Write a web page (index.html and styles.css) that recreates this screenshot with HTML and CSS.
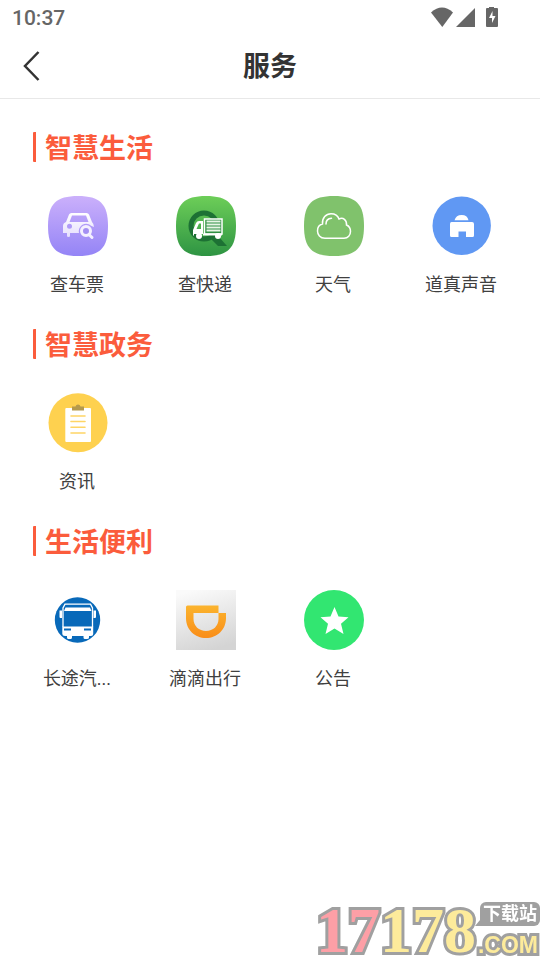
FILE: index.html
```html
<!DOCTYPE html>
<html lang="zh-CN">
<head>
<meta charset="utf-8">
<meta name="viewport" content="width=device-width, initial-scale=1">
<title>服务</title>
<link rel="stylesheet" href="styles.css">
</head>
<body>
<div class="status">
  <span class="time">10:37</span>
  <svg class="status-icons" width="68" height="22" viewBox="0 0 68 22" fill="#666" aria-hidden="true">
    <path d="M1 6.500Q12-3.500 23 6.500L12.300 21Z"/>
    <path d="M26 21L45 2V21Z"/>
    <path fill-rule="evenodd" d="M59 1h5v1h3q1 0 1 1v17q0 1-1 1H57q-1 0-1-1V3q0-1 1-1h2ZM62.500 5L59 12h3v5l3.500-7h-3Z"/>
  </svg>
</div>
<header class="bar">
  <button class="back" type="button" aria-label="返回">
    <svg width="18" height="32" viewBox="0 0 18 32" fill="none" stroke="#333" stroke-width="2.500" aria-hidden="true"><path d="M15.500 1L2 15L15.500 29"/></svg>
  </button>
  <h1>服务</h1>
</header>
<main>
  <section>
    <h2>智慧生活</h2>
    <div class="grid">
      <a class="item" href="#ticket">
        <svg class="icon" viewBox="0 0 60 60" aria-hidden="true">
          <defs>
            <linearGradient id="violet" x1="0" y1="0" x2="0" y2="1"><stop stop-color="#cbb0fb"/><stop offset="1" stop-color="#9484f6"/></linearGradient>
            <linearGradient id="pale" x1="0" y1="0" x2="0" y2="1"><stop stop-color="#fff"/><stop offset="1" stop-color="#e6defd"/></linearGradient>
          </defs>
          <path fill="url(#violet)" d="M30 0C52 0 60 8 60 30S52 60 30 60 0 52 0 30 8 0 30 0Z"/>
          <path fill="url(#pale)" fill-rule="evenodd" d="M18 26L21 18.500Q21.700 17 23.500 17H38.500Q40.300 17 41 18.500L44 26Q46 28 46 31L43.500 30Q39 26 34 29Q30 32 31 37H22V40Q22 41 20.500 41T19 40V37H15V30Q15 27 18 26ZM24 19.500L21.500 26H40.500L38 19.500ZM21.500 27.800a2.500 2.500 0 1 0 0 5 2.500 2.500 0 0 0 0-5Z"/>
          <circle cx="38" cy="35" r="4.500" fill="#a48ff3" stroke="#f4f0ff" stroke-width="3"/>
          <path d="M41 38.500L44 41.500" stroke="#f4f0ff" stroke-width="3" stroke-linecap="round"/>
        </svg>
        <span class="label">查车票</span>
      </a>
      <a class="item" href="#parcel">
        <svg class="icon" viewBox="0 0 60 60" aria-hidden="true">
          <defs><linearGradient id="green" x1="0" y1="0" x2="0" y2="1"><stop stop-color="#6dce58"/><stop offset="1" stop-color="#2e9443"/></linearGradient></defs>
          <path fill="url(#green)" d="M30 0C52 0 60 8 60 30S52 60 30 60 0 52 0 30 8 0 30 0Z"/>
          <circle cx="28" cy="30" r="13" fill="none" stroke="#1d7134" stroke-width="5"/>
          <path d="M36 40L43 41L51 50H42L34 42Z" fill="#1d7134"/>
          <path fill="#2f8f42" stroke="#fff" stroke-width="1.500" d="M28.500 23H46V38H28.500Z"/>
          <path d="M30.500 25.500H44.500M30.500 28.500H44.500M30.500 31.500H44.500M30.500 34.500H44.500" stroke="#e8f5e5" stroke-width="2"/>
          <path fill="#fff" fill-rule="evenodd" d="M27 25V38H18V40L17 39V34L20 27Q21 25 23 25ZM25 27.500H23L20.500 33H25Z"/>
          <path d="M27 38.500H46" stroke="#fff" stroke-width="2"/>
          <circle cx="23" cy="40" r="3" fill="#fff"/><circle cx="42" cy="40" r="3" fill="#fff"/>
        </svg>
        <span class="label">查快递</span>
      </a>
      <a class="item" href="#weather">
        <svg class="icon" viewBox="0 0 60 60" aria-hidden="true">
          <path fill="#80c26c" d="M30 0C52 0 60 8 60 30S52 60 30 60 0 52 0 30 8 0 30 0Z"/>
          <path fill="none" stroke="#fff" stroke-width="1.500" stroke-linecap="round" d="M21 42.200C16 42.200 13.500 38.500 13.500 35C13.500 31 16 28.500 18.500 28C18 22 22 17.700 27 17.700C31 17.700 34 20 35 23C39 21 43 24 42.500 29C45 30 46.500 32.500 46.500 35.500C46.500 39 44 42.200 40 42.200ZM22 28C22 24.500 24 22.500 27.500 22.300"/>
        </svg>
        <span class="label">天气</span>
      </a>
      <a class="item" href="#voice">
        <svg class="icon" viewBox="0 0 60 60" aria-hidden="true">
          <circle cx="29.700" cy="29.700" r="29.200" fill="#6098f3"/>
          <path fill="#fff" d="M22.500 24.300Q24 19 29.700 19T36.500 24.300ZM19.500 26H40Q42 26 42 28V39.500Q42 41 40.500 41H34V35.500H26.500V41H19.500Q18 41 18 39.500V28Q18 26 19.500 26Z"/>
        </svg>
        <span class="label">道真声音</span>
      </a>
    </div>
  </section>
  <section>
    <h2>智慧政务</h2>
    <div class="grid">
      <a class="item" href="#news">
        <svg class="icon" viewBox="0 0 60 60" aria-hidden="true">
          <circle cx="30" cy="29.700" r="29.500" fill="#fed14f"/>
          <rect x="17.300" y="15" width="25.700" height="34" rx="1" fill="#fff"/>
          <path fill="#b59a4c" d="M24 13.500H27.500Q28 11.500 30 11.500T32.500 13.500H36V17.500H24Z"/>
          <path d="M23 23H37M23 28.500H37M23 34.300H37M23 40H37" stroke="#fed565" stroke-width="1.600" stroke-linecap="round"/>
        </svg>
        <span class="label">资讯</span>
      </a>
    </div>
  </section>
  <section>
    <h2>生活便利</h2>
    <div class="grid">
      <a class="item" href="#coach">
        <svg class="icon" viewBox="0 0 60 60" aria-hidden="true">
          <circle cx="29.500" cy="30" r="22.700" fill="#0869b9"/>
          <path fill="none" stroke="#fff" stroke-width="1.300" d="M15 37V18L17 14.200H42.500L44.500 18V37"/>
          <path fill="#fff" d="M17.500 17.500H42L43.500 21H16ZM11.500 20.500H14V28H12.500Q11.500 28 11.500 27ZM45.500 20.500H48V27Q48 28 47 28H45.500ZM14.300 36.500H45.200V44Q45.200 46 43 46H41V47.500Q41 49 39 49H37Q35.500 49 35.500 47.500V46H24V47.500Q24 49 22.500 49H20.500Q19 49 19 47.500V46H17Q14.300 46 14.300 44Z"/>
          <path fill="#0869b9" d="M16 38.500H23V40.500H16ZM36 38.500H43V40.500H36Z"/>
        </svg>
        <span class="label">长途汽...</span>
      </a>
      <a class="item" href="#ride">
        <svg class="icon" viewBox="0 0 60 60" aria-hidden="true">
          <defs>
            <linearGradient id="silver" x1=".3" y1="0" x2=".6" y2="1"><stop stop-color="#fafafa"/><stop offset="1" stop-color="#d4d4d4"/></linearGradient>
            <linearGradient id="orange" x1="0" y1="0" x2="0" y2="1"><stop stop-color="#fbb42e"/><stop offset="1" stop-color="#f98d19"/></linearGradient>
          </defs>
          <rect width="60" height="60" fill="url(#silver)"/>
          <path fill="url(#orange)" fill-rule="evenodd" d="M11.500 15.500H42.500V23H50V28C50 40 41 48 30 48S10 40 10 28V17Q10 15.500 11.500 15.500ZM17.500 23V29C17.500 36 23 41 30 41S42.500 36 42.500 29V23Z"/>
        </svg>
        <span class="label">滴滴出行</span>
      </a>
      <a class="item" href="#notice">
        <svg class="icon" viewBox="0 0 60 60" aria-hidden="true">
          <circle cx="30" cy="30" r="30" fill="#32e671"/>
          <path fill="#fff" d="M30.500 17L34.500 26.500L44.500 27.200L37 33.800L39.500 44L30.500 38.500L21.500 44L24 33.800L16.500 27.200L26.500 26.500Z"/>
        </svg>
        <span class="label">公告</span>
      </a>
    </div>
  </section>
</main>
<div class="mark">
  <div class="digits"><span class="pink">17</span><span>178</span></div>
  <div class="side"><span class="tag">下载站</span><span class="com">.COM</span></div>
</div>
</body>
</html>
```
FILE: styles.css
```css
* { box-sizing: border-box; }

body {
  margin: 0;
  min-height: 100vh;
  background: #fff;
  color: #333;
  font-family: Roboto, "Noto Sans CJK SC", sans-serif;
}

.status {
  display: flex;
  align-items: center;
  justify-content: space-between;
  height: 36px;
  padding: 0 42px 0 12px;
  color: #666;
}

.status-icons { margin-bottom: 2px; }

.time {
  font-size: 21px;
  line-height: 38px;
  font-weight: 500;
}

.bar {
  display: grid;
  grid-template-columns: 64px 1fr 64px;
  align-items: center;
  height: 63px;
  border-bottom: 1px solid #e8e8e8;
}

.back {
  display: flex;
  align-items: center;
  height: 60px;
  padding: 0 0 0 23px;
  border: 0;
  background: none;
}

h1 {
  margin: 0;
  font-size: 27px;
  line-height: 40px;
  font-weight: 700;
  text-align: center;
}

main { padding-top: 33px; }

section { margin-bottom: 32px; }

h2 {
  margin: 0 33px 34px;
  padding: 4px 0 0 9px;
  border-left: 3px solid #fb5c3c;
  border-radius: 1px;
  color: #fb5c3c;
  font-size: 27px;
  line-height: 26px;
  font-weight: 700;
}

.grid {
  display: grid;
  grid-template-columns: repeat(4, 1fr);
  padding: 0 14px;
}

.item {
  display: flex;
  flex-direction: column;
  align-items: center;
  gap: 16px;
  color: #404040;
  font-size: 18px;
  line-height: 25px;
  text-decoration: none;
}

.label { padding-right: 2px; }

.icon {
  width: 60px;
  height: 60px;
}

.mark {
  position: fixed;
  right: 0;
  bottom: 0;
  display: flex;
  align-items: flex-end;
  gap: 2px;
  color: #fdeb9b;
  font-weight: 700;
  -webkit-text-stroke: 6px #a0a0a0;
  paint-order: stroke fill;
}

.digits {
  font-family: "Liberation Serif", serif;
  font-size: 64px;
  line-height: 58px;
}

.pink { color: #fd9fa6; }

.side {
  display: flex;
  flex-direction: column;
  align-items: flex-end;
  gap: 4px;
}

.tag {
  position: relative;
  padding: 0 3px;
  border-radius: 6px 6px 6px 0;
  background: #a0a0a0;
  color: #fff;
  font-size: 18px;
  line-height: 24px;
  -webkit-text-stroke: 0;
}

.tag::before {
  content: "";
  position: absolute;
  right: 100%;
  bottom: 0;
  border-left: 5px solid transparent;
  border-bottom: 6px solid #a0a0a0;
}

.com {
  padding-right: 2px;
  font-family: "Liberation Sans", sans-serif;
  font-size: 23px;
  line-height: 30px;
}
```
